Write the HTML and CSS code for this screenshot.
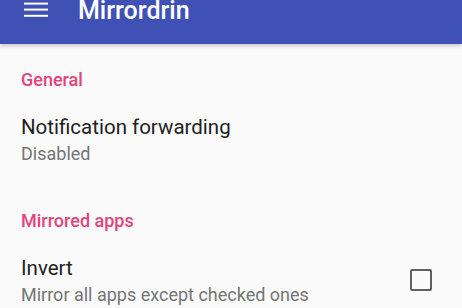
FILE: index.html
```html
<!DOCTYPE html>
<html lang="en">
<head>
    <meta charset="UTF-8">
    <meta name="viewport" content="width=device-width, initial-scale=1.0">
    <title>Mirrordrin</title>
    <link rel="stylesheet" href="styles.css">
</head>
<body>

<div class="toolbar">
    <svg class="menu-icon" width="24" height="18" viewBox="0 0 24 18">
        <rect x="0" y="2.6" width="24" height="2" fill="#fff"/>
        <rect x="0" y="8.6" width="24" height="2" fill="#fff"/>
        <rect x="0" y="14.8" width="24" height="2" fill="#fff"/>
    </svg>
    <div class="toolbar-title">Mirrordrin</div>
</div>

<div class="settings">
    <div class="category">General</div>

    <div class="pref">
        <div class="pref-text">
            <div class="pref-title">Notification forwarding</div>
            <div class="pref-summary">Disabled</div>
        </div>
    </div>

    <div class="category">Mirrored apps</div>

    <div class="pref">
        <div class="pref-text">
            <div class="pref-title">Invert</div>
            <div class="pref-summary">Mirror all apps except checked ones</div>
        </div>
        <div class="checkbox"></div>
    </div>
</div>

</body>
</html>
```

FILE: styles.css
```css
body {
    margin: 0;
    font-family: Roboto, "Noto Sans", sans-serif;
    background-color: #fafafa;
    overflow: hidden;
}

.toolbar {
    height: 44px;
    background-color: #3f51b5;
    display: flex;
    align-items: flex-start;
    box-shadow: 0 2px 4px rgba(0, 0, 0, 0.2);
}

.menu-icon {
    margin-left: 24px;
}

.toolbar-title {
    margin-left: 30px;
    color: #ffffff;
    font-size: 25px;
    font-weight: 500;
    line-height: 21px;
}

.settings {
    padding-left: 21px;
    padding-right: 30px;
}

.category {
    color: #e2457c;
    font-size: 18px;
    font-weight: 500;
    line-height: 20px;
    padding-top: 26px;
    padding-bottom: 10px;
}

.pref {
    display: flex;
    align-items: center;
    padding: 14px 0 17px;
}

.pref-text {
    flex: 1;
}

.pref-title {
    color: #212121;
    font-size: 20.5px;
    line-height: 26px;
}

.pref-summary {
    color: #757575;
    font-size: 18px;
    line-height: 28px;
}

.checkbox {
    width: 18px;
    height: 18px;
    border: 2.5px solid #616161;
    border-radius: 2px;
    margin-bottom: 5px;
}
```
